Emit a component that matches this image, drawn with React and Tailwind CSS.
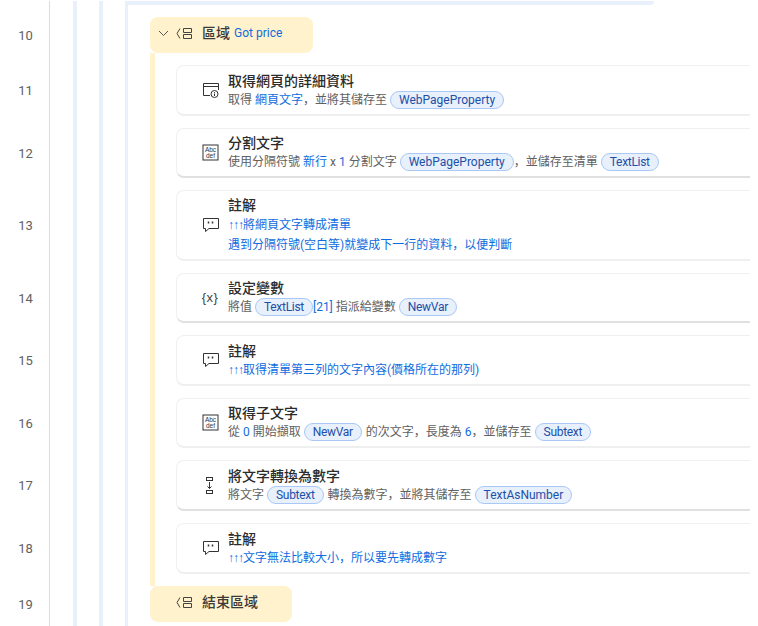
const font = { fontFamily: "Roboto, 'Noto Sans CJK SC', sans-serif" };

const Guides = () => (
  <>
    <div className="ml-[23px] w-[4px] shrink-0 bg-[#e8f0fc]" />
    <div className="ml-[22px] w-[4px] shrink-0 bg-[#e8f0fc]" />
    <div className="ml-[22px] w-[3px] shrink-0 bg-[#e8f0fc]" />
  </>
);

const LineNo = ({ n }) => (
  <div className="w-[50px] shrink-0 border-r border-[#dcdcdc] flex items-center justify-center pl-[2px] pt-[1px] text-[13px] text-[#616161]">
    {n}
  </div>
);

const V = ({ children }) => (
  <span className="inline-flex items-center h-[18px] px-[8px] ml-[3px] mr-[4px] rounded-full border border-[#a9c8f5] bg-[#e8f0fc] text-[#1c4fa8] text-[12px] leading-none">
    {children}
  </span>
);

// short names run a bit narrower in the reference
const VS = ({ children }) => (
  <span className="inline-flex items-center h-[18px] px-[8px] ml-[3px] mr-[4px] rounded-full border border-[#a9c8f5] bg-[#e8f0fc] text-[#1c4fa8] text-[12px] leading-none tracking-[-0.3px]">
    {children}
  </span>
);

const B = ({ children }) => <span className="text-[#0f6ce0]">{children}</span>;

const Arrows = () => (
  <span className="tracking-[-1px] text-[#0f6ce0]" style={{ fontFamily: "'Liberation Sans', sans-serif" }}>↑↑↑</span>
);

const WebIcon = () => (
  <svg width="17" height="16" viewBox="0 0 17 16" fill="none" stroke="#333" strokeWidth="1">
    <path d="M8 13.5H1.5V1.5H16.5V8" />
    <path d="M1.5 4.5H16.5" />
    <circle cx="12.5" cy="12" r="3.5" />
    <path d="M12.5 11.5V14M12.5 10V10.8" />
  </svg>
);

const AbcIcon = () => (
  <svg width="17" height="17" viewBox="0 0 17 17" fill="none">
    <rect x="1" y="1" width="15" height="15" stroke="#333" />
    <text x="8.5" y="7.5" textAnchor="middle" fontSize="6.5" fill="#333" fontFamily="Liberation Sans">Abc</text>
    <text x="8.5" y="13.5" textAnchor="middle" fontSize="6.5" fill="#333" fontFamily="Liberation Sans">def</text>
  </svg>
);

const CommentIcon = () => (
  <svg width="17" height="16" viewBox="0 0 17 16" fill="none" stroke="#333">
    <path d="M1.5 1.5H16.5V11.5H7L3.5 14.5V11.5H1.5Z" />
    <path d="M6.5 4.5V6.5M10.5 4.5V6.5" strokeWidth="1.5" />
  </svg>
);

const VarIcon = () => (
  <span className="text-[13px] text-[#444] whitespace-nowrap tracking-[0.5px]" style={{ fontFamily: "'Liberation Sans', sans-serif" }}>{"{x}"}</span>
);

const ConvertIcon = () => (
  <svg width="10" height="17" viewBox="0 0 10 17" fill="none" stroke="#333">
    <rect x="1.5" y="0.5" width="6" height="3" />
    <rect x="1.5" y="13.5" width="6" height="3" />
    <path d="M4.5 5V11.5M2.5 9.5L4.5 11.5L6.5 9.5" />
  </svg>
);

const RegionIcon = () => (
  <svg width="16" height="13" viewBox="0 0 16 13" fill="none" stroke="#444">
    <path d="M4 1.5L1 6.5L4 11.5" />
    <path d="M7.5 1.5H15.5V5.5H7.5ZM7.5 7.5H15.5V11.5H7.5Z" />
  </svg>
);

const Row = ({ n, h, dark, icon, title, lines }) => (
  <div className={`flex ${h}`}>
    <LineNo n={n} />
    <Guides />
    <div className="ml-[22px] w-[5px] shrink-0 bg-[#fff2cc]" />
    <div className="ml-[21px] w-[574px] shrink-0 py-[6px] flex">
      <div className={`flex-1 flex items-center rounded-l-lg border border-r-0 border-[#f0f0f0] bg-white ${dark ? "border-b-2 border-b-[#e0e0e0]" : "border-b-2 border-b-[#efefef]"}`}>
        <div className="w-[51px] shrink-0 flex justify-center pl-[24px] pr-[9px]">{icon}</div>
        <div className="min-w-0">
          <div className="text-[14px] leading-[19px] font-medium text-[#2b2b2b]">{title}</div>
          {lines.map((line, i) => (
            <div key={i} className={`flex items-center whitespace-nowrap text-[12px] text-[#616161] ${lines.length > 1 ? "leading-[20px]" : "leading-[18px] h-[18px]"}`}>
              {line}
            </div>
          ))}
        </div>
      </div>
    </div>
  </div>
);

const App = () => {
  return (
    <div className="w-[758px] h-[626px] overflow-hidden bg-white pt-px" style={font}>
      {/* end of the previous block */}
      <div className="flex h-[16px]">
        <LineNo n="" />
        <div className="ml-[23px] w-[4px] shrink-0 bg-[#e8f0fc]" />
        <div className="ml-[22px] w-[4px] shrink-0 bg-[#e8f0fc]" />
        <div className="ml-[22px] w-[3px] shrink-0 bg-[#e8f0fc]" />
        <div className="w-[526px] h-[4px] rounded-br-lg bg-[#e8f0fc]" />
      </div>

      <div className="flex h-[36px]">
        <LineNo n="10" />
        <Guides />
        <div className="ml-[22px] w-[163px] flex items-center rounded-lg bg-[#fff2cc] pb-[3px]">
          <svg className="ml-[8px]" width="11" height="7" viewBox="0 0 11 7" fill="none" stroke="#555"><path d="M1 1L5.5 5.5L10 1" /></svg>
          <span className="ml-[7px]"><RegionIcon /></span>
          <span className="ml-[10px] text-[14px] font-medium text-[#3a3a3a]">區域</span>
          <span className="ml-[4px] -mt-[2px] text-[12px] text-[#0f6ce0]">Got price</span>
        </div>
      </div>

      <div className="flex h-[6px]">
        <LineNo n="" />
        <Guides />
        <div className="ml-[22px] w-[5px] bg-[#fff2cc]" />
      </div>

      <Row n="11" h="h-[63px]" icon={<WebIcon />} title="取得網頁的詳細資料"
        lines={[<>取得&nbsp;<B>網頁文字</B>，並將其儲存至<V>WebPageProperty</V></>]} />
      <Row n="12" h="h-[62px]" dark icon={<AbcIcon />} title="分割文字"
        lines={[<>使用分隔符號&nbsp;<B>新行</B>&nbsp;x&nbsp;<B>1</B>&nbsp;分割文字<V>WebPageProperty</V><span className="-ml-[4px]">，並儲存至清單</span><VS>TextList</VS></>]} />
      <Row n="13" h="h-[83px]" icon={<CommentIcon />} title="註解"
        lines={[<><Arrows /><B>將網頁文字轉成清單</B></>, <B>遇到分隔符號(空白等)就變成下一行的資料，以便判斷</B>]} />
      <Row n="14" h="h-[62px]" dark icon={<VarIcon />} title="設定變數"
        lines={[<>將值<VS>TextList</VS><span className="-ml-[4px] text-[#0f6ce0]">[21]</span>&nbsp;指派給變數<VS>NewVar</VS></>]} />
      <Row n="15" h="h-[63px]" icon={<CommentIcon />} title="註解"
        lines={[<><Arrows /><B>取得清單第三列的文字內容(價格所在的那列)</B></>]} />
      <Row n="16" h="h-[62px]" icon={<AbcIcon />} title="取得子文字"
        lines={[<>從&nbsp;<B>0</B>&nbsp;開始擷取<VS>NewVar</VS>的次文字，長度為&nbsp;<B>6</B>，並儲存至<VS>Subtext</VS></>]} />
      <Row n="17" h="h-[63px]" dark icon={<ConvertIcon />} title="將文字轉換為數字"
        lines={[<>將文字<VS>Subtext</VS>轉換為數字，並將其儲存至<V>TextAsNumber</V></>]} />
      <Row n="18" h="h-[63px]" icon={<CommentIcon />} title="註解"
        lines={[<><Arrows /><B>文字無法比較大小，所以要先轉成數字</B></>]} />

      <div className="flex h-[6px]">
        <LineNo n="" />
        <Guides />
        <div className="ml-[22px] w-[5px] bg-[#fff2cc]" />
      </div>

      <div className="flex h-[36px]">
        <LineNo n="19" />
        <Guides />
        <div className="ml-[22px] w-[142px] flex items-center rounded-lg bg-[#fff2cc] pb-[4px]">
          <span className="ml-[26px]"><RegionIcon /></span>
          <span className="ml-[10px] text-[14px] font-medium text-[#3a3a3a]">結束區域</span>
        </div>
      </div>

      <div className="flex h-[4px]">
        <LineNo n="" />
        <Guides />
      </div>
    </div>
  );
};

export default App;
